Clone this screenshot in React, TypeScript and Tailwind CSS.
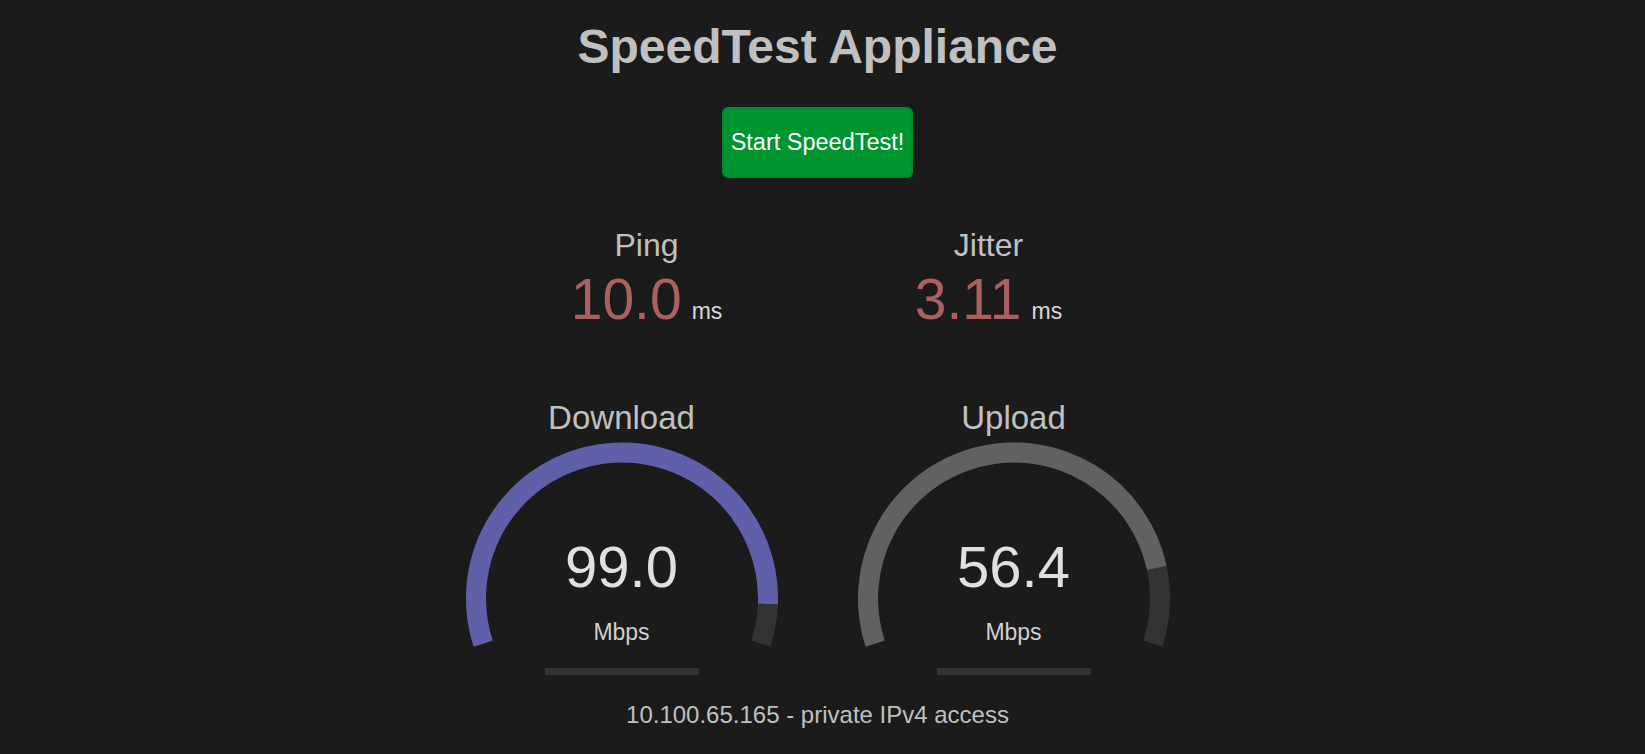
import React from "react";

const font = { fontFamily: '"Liberation Sans", Arial, sans-serif' };

const CX = 196;
const CY = 164.5;
const R = 146;

function pt(deg: number) {
  const a = (deg * Math.PI) / 180;
  return [CX + R * Math.cos(a), CY + R * Math.sin(a)];
}

function arc(from: number, to: number) {
  const [x1, y1] = pt(from);
  const [x2, y2] = pt(to);
  const large = to - from > 180 ? 1 : 0;
  return `M ${x1} ${y1} A ${R} ${R} 0 ${large} 1 ${x2} ${y2}`;
}

// librespeed-style scale: 1 - 1/1.3^sqrt(mbps)
function amount(mbps: number) {
  return 1 - 1 / Math.pow(1.3, Math.sqrt(mbps));
}

function Gauge({ name, value, color }: { name: string; value: number; color: string }) {
  const start = 162;
  const end = start + 216 * amount(value);
  return (
    <div className="flex w-[392px] flex-col items-center">
      <div className="mt-[1px] text-[33px] leading-none text-[#c0c0c0]">{name}</div>
      <div className="relative h-[250px] w-[392px]">
        <svg width="392" height="250" viewBox="0 0 392 250">
          <path d={arc(162, 378)} fill="none" stroke="#333333" strokeWidth="20" />
          <path d={arc(start, end)} fill="none" stroke={color} strokeWidth="20" />
          <rect x="119" y="234" width="154" height="7" fill="#333333" />
        </svg>
        <div className="absolute left-0 right-0 top-[104px] text-center text-[58px] leading-none text-[#e0e0e0]">
          {value.toFixed(1)}
        </div>
        <div className="absolute left-0 right-0 top-[187px] text-center text-[23px] leading-none text-[#d0d0d0]">
          Mbps
        </div>
      </div>
    </div>
  );
}

function Stat({ name, value }: { name: string; value: string }) {
  return (
    <div className="flex flex-col items-center">
      <div className="text-[32px] leading-none text-[#c0c0c0]">{name}</div>
      <div className="mt-[10px] flex items-baseline leading-none">
        <span className="text-[57px] text-[#aa6060]">{value}</span>
        <span className="ml-[10px] text-[23px] text-[#d8d8d8]">ms</span>
      </div>
    </div>
  );
}

export default function App() {
  return (
    <div className="min-h-screen bg-[#1b1b1b] pr-[10px]" style={font}>
      <div className="flex flex-col items-center">
        <h1 className="mt-[23px] text-[48px] font-bold leading-none text-[#c0c0c0]">
          SpeedTest Appliance
        </h1>
        <button className="mt-[36px] h-[71px] w-[191px] rounded-[6px] border-2 border-[#008a2c] bg-[#00962f] text-[23.5px] text-white">
          Start SpeedTest!
        </button>
        <div className="mt-[51px] grid w-[684px] grid-cols-2">
          <Stat name="Ping" value="10.0" />
          <Stat name="Jitter" value="3.11" />
        </div>
        <div className="mt-[72px] flex">
          <Gauge name="Download" value={99.0} color="#6060aa" />
          <Gauge name="Upload" value={56.4} color="#616161" />
        </div>
        <div className="mt-[19px] text-[24px] leading-none text-[#c0c0c0]">
          10.100.65.165 - private IPv4 access
        </div>
      </div>
    </div>
  );
}
